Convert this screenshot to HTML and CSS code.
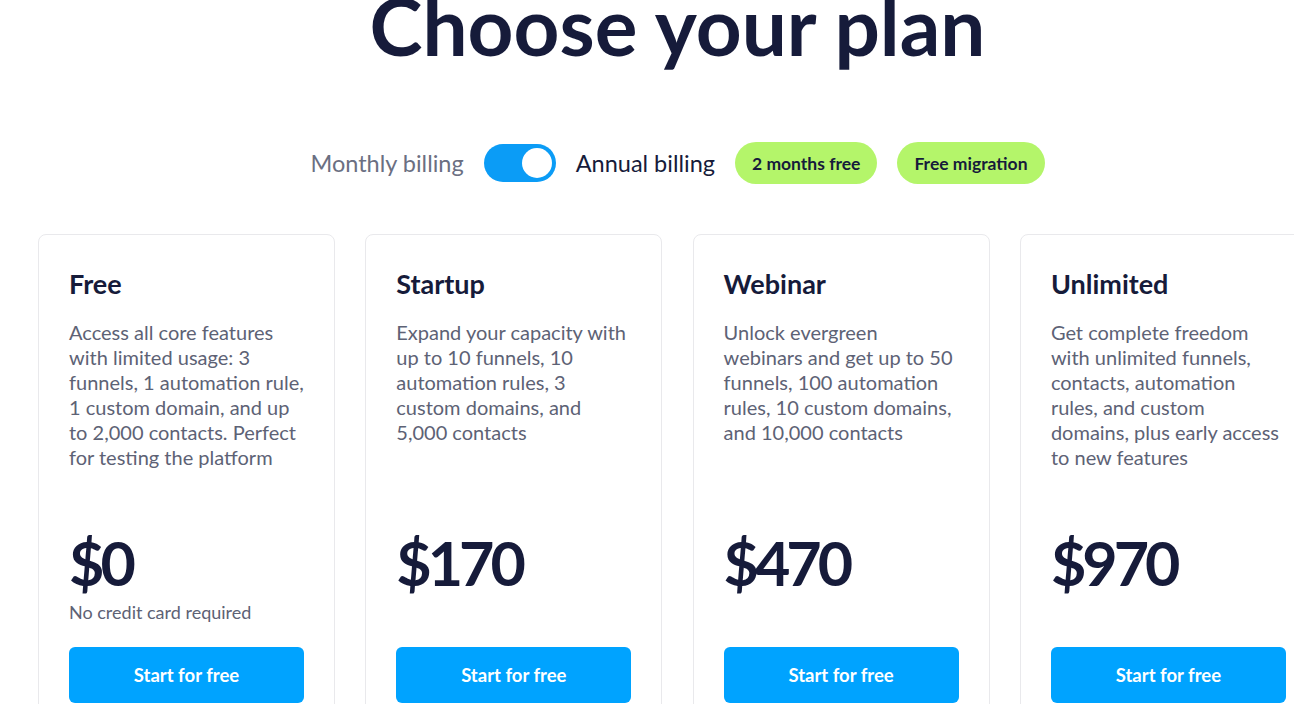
FILE: index.html
```html
<!DOCTYPE html>
<html lang="en">
<head>
<meta charset="utf-8">
<title>Choose your plan</title>
<link rel="stylesheet" href="styles.css">
</head>
<body>
<main class="page">
  <h1 class="title">Choose your plan</h1>
  <div class="billing">
    <span class="billing-label muted">Monthly billing</span>
    <span class="toggle" role="switch" aria-checked="true"><span class="knob"></span></span>
    <span class="billing-label">Annual billing</span>
    <span class="badge">2 months free</span>
    <span class="badge">Free migration</span>
  </div>
  <div class="plans">
    <section class="card">
      <h2 class="plan-name">Free</h2>
      <p class="plan-desc">Access all core features<br>with limited usage: 3<br>funnels, 1 automation rule,<br>1 custom domain, and up<br>to 2,000 contacts. Perfect<br>for testing the platform</p>
      <div class="price">$0</div>
      <div class="note">No credit card required</div>
      <a class="cta" href="#">Start for free</a>
    </section>
    <section class="card">
      <h2 class="plan-name">Startup</h2>
      <p class="plan-desc">Expand your capacity with<br>up to 10 funnels, 10<br>automation rules, 3<br>custom domains, and<br>5,000 contacts</p>
      <div class="price">$170</div>
      <div class="note"></div>
      <a class="cta" href="#">Start for free</a>
    </section>
    <section class="card">
      <h2 class="plan-name">Webinar</h2>
      <p class="plan-desc">Unlock evergreen<br>webinars and get up to 50<br>funnels, 100 automation<br>rules, 10 custom domains,<br>and 10,000 contacts</p>
      <div class="price">$470</div>
      <div class="note"></div>
      <a class="cta" href="#">Start for free</a>
    </section>
    <section class="card">
      <h2 class="plan-name">Unlimited</h2>
      <p class="plan-desc">Get complete freedom<br>with unlimited funnels,<br>contacts, automation<br>rules, and custom<br>domains, plus early access<br>to new features</p>
      <div class="price">$970</div>
      <div class="note"></div>
      <a class="cta" href="#">Start for free</a>
    </section>
  </div>
</main>
</body>
</html>
```
FILE: styles.css
```css
* { box-sizing: border-box; }
html, body { margin: 0; padding: 0; background: #ffffff; }
body {
  font-family: "Lato", "Inter", "Liberation Sans", sans-serif;
  color: #161b3a;
  overflow: hidden;
  width: 1294px;
  height: 704px;
}
.page {
  width: 1355px;
  padding: 0 38px;
  display: flex;
  flex-direction: column;
  align-items: center;
}
.title {
  margin: -19px 0 0;
  font-size: 80px;
  line-height: 88px;
  font-weight: 700;
  letter-spacing: 0;
  color: #161b3a;
  white-space: nowrap;
}
.billing {
  margin-top: 73px;
  display: flex;
  align-items: center;
  height: 42px;
  gap: 20px;
}
.billing-label { font-size: 23.5px; color: #161b3a; white-space: nowrap; }
.billing-label.muted { color: #6b6f82; }
.toggle {
  width: 72px;
  height: 38px;
  border-radius: 19px;
  background: #0b9cf6;
  display: flex;
  align-items: center;
  justify-content: flex-end;
  padding: 0 4px;
}
.knob { width: 30px; height: 30px; border-radius: 50%; background: #ffffff; }
.badge {
  height: 42px;
  padding: 0 17px;
  border-radius: 21px;
  background: #b4f56a;
  display: flex;
  align-items: center;
  font-size: 17.5px;
  font-weight: 700;
  color: #161b3a;
  white-space: nowrap;
}
.plans {
  align-self: stretch;
  margin-top: 50px;
  display: flex;
  gap: 30.3px;
}
.card {
  flex: 0 0 297px;
  height: 520px;
  border: 1px solid #e9e9ec;
  border-radius: 8px;
  padding: 33px 30px 0;
  display: flex;
  flex-direction: column;
}
.plan-name { margin: 0; font-size: 27px; line-height: 32px; font-weight: 700; color: #161b3a; }
.plan-desc {
  margin: 20px 0 0;
  height: 150px;
  font-size: 20px;
  line-height: 25px;
  color: #5d6275;
  white-space: nowrap;
}
.price { margin-top: 58px; font-size: 61px; line-height: 70px; font-weight: 700; color: #161b3a; letter-spacing: -4px; }
.note { margin-top: 2px; height: 24px; font-size: 18px; line-height: 24px; color: #5d6275; }
.cta {
  margin-top: 23px;
  height: 56px;
  border-radius: 6px;
  background: #00a3ff;
  color: #ffffff;
  text-decoration: none;
  display: flex;
  align-items: center;
  justify-content: center;
  font-size: 18.5px;
  font-weight: 700;
}
```
